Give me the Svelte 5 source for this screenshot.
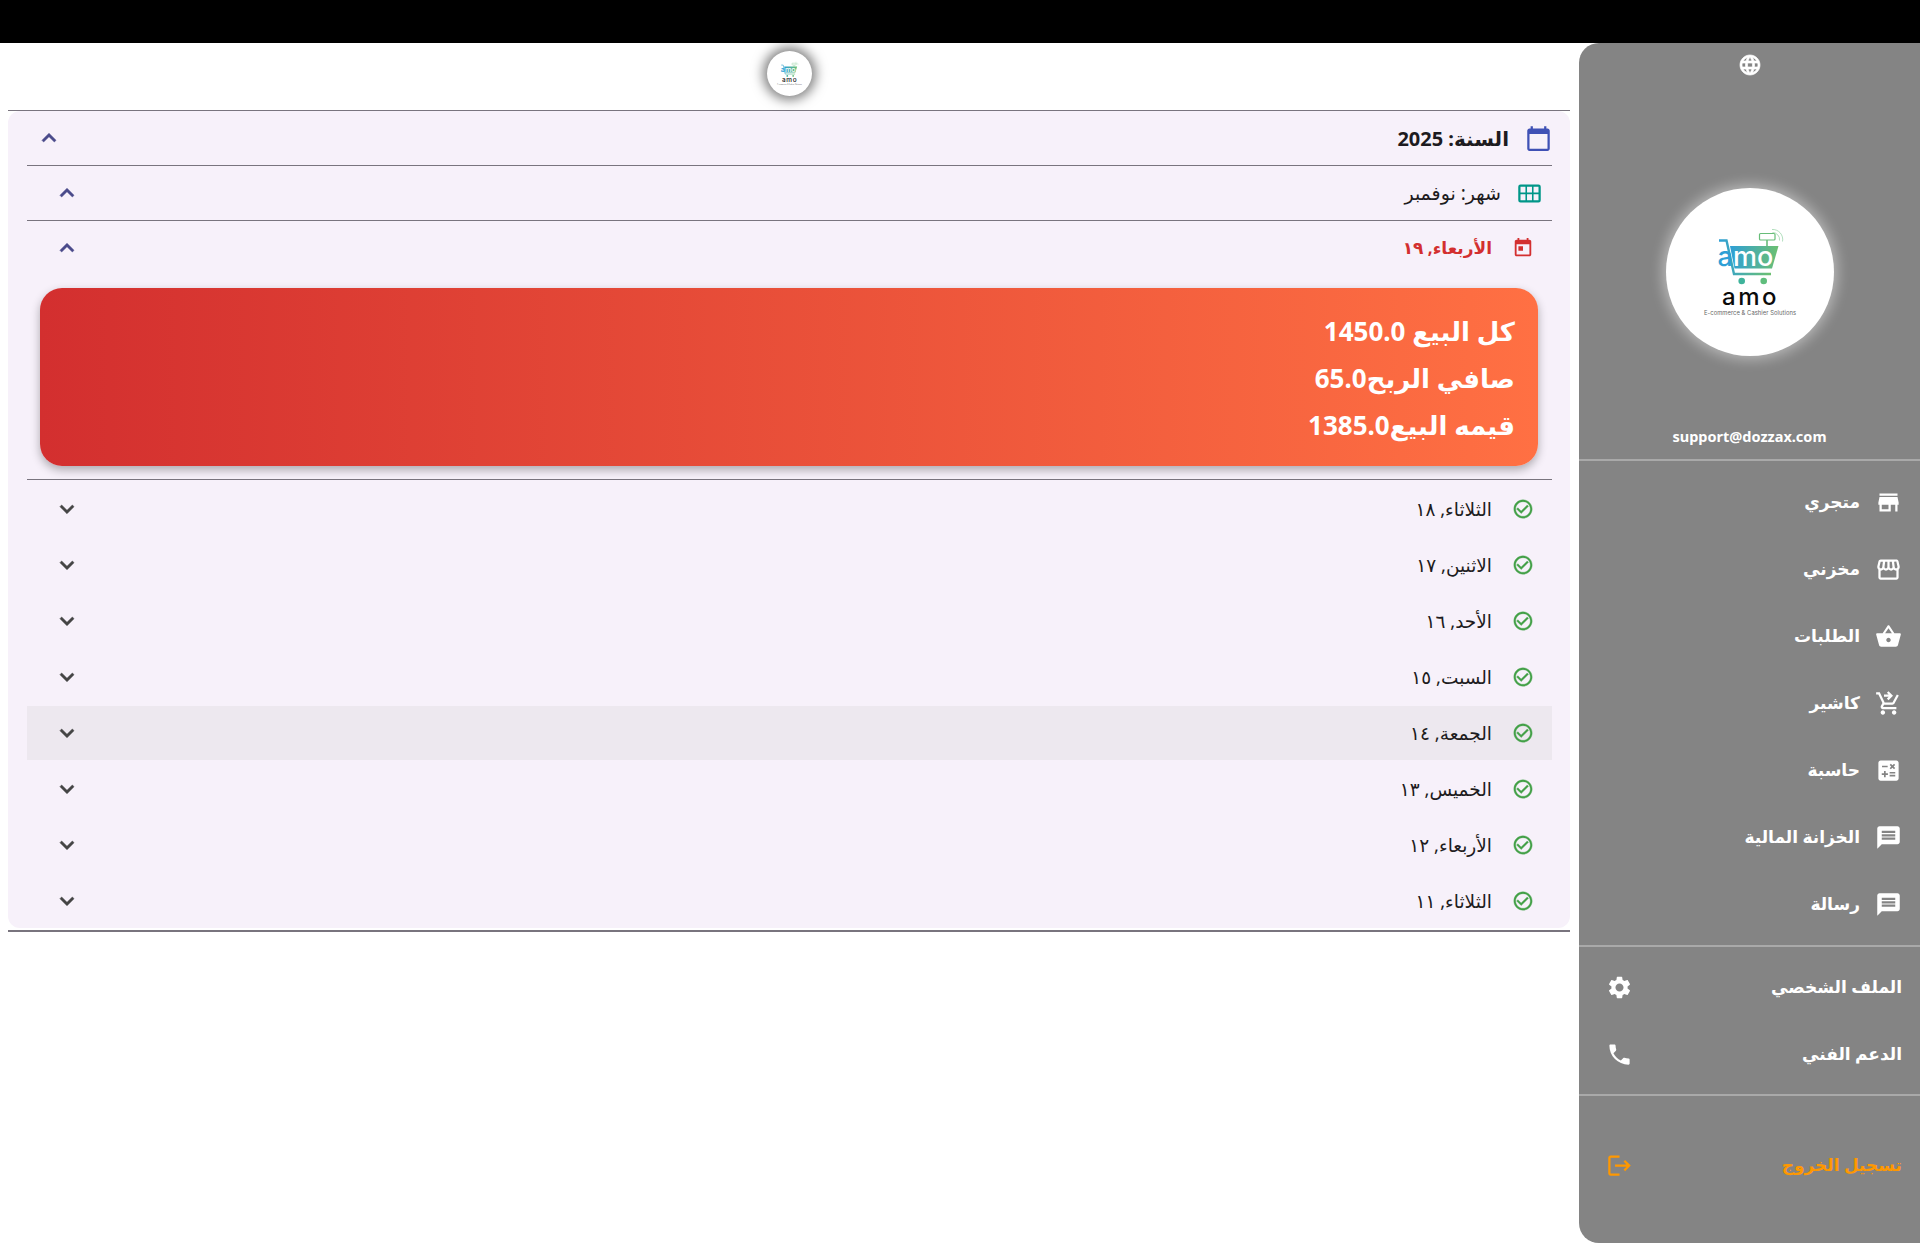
<script>
  const icons = {
    globe: 'M11.99 2C6.47 2 2 6.48 2 12s4.47 10 9.99 10C17.52 22 22 17.52 22 12S17.52 2 11.99 2zm6.93 6h-2.95c-.32-1.25-.78-2.45-1.38-3.56 1.84.63 3.37 1.91 4.33 3.56zM12 4.04c.83 1.2 1.48 2.53 1.91 3.96h-3.82c.43-1.43 1.08-2.76 1.91-3.96zM4.26 14C4.1 13.36 4 12.69 4 12s.1-1.36.26-2h3.38c-.08.66-.14 1.32-.14 2 0 .68.06 1.34.14 2H4.26zm.82 2h2.95c.32 1.25.78 2.45 1.38 3.56-1.84-.63-3.37-1.9-4.33-3.56zm2.95-8H5.08c.96-1.66 2.49-2.93 4.33-3.56C8.81 5.55 8.35 6.75 8.03 8zM12 19.96c-.83-1.2-1.48-2.53-1.91-3.96h3.82c-.43 1.43-1.08 2.76-1.91 3.96zM14.34 14H9.66c-.09-.66-.16-1.32-.16-2 0-.68.07-1.35.16-2h4.68c.09.65.16 1.32.16 2 0 .68-.07 1.34-.16 2zm.25 5.56c.6-1.11 1.06-2.31 1.38-3.56h2.95c-.96 1.65-2.49 2.93-4.33 3.56zM16.36 14c.08-.66.14-1.32.14-2 0-.68-.06-1.34-.14-2h3.38c.16.64.26 1.31.26 2s-.1 1.36-.26 2h-3.38z',
    store: 'M20 4H4v2h16V4zm1 10v-2l-1-5H4l-1 5v2h1v6h10v-6h4v6h2v-6h1zm-9 4H6v-4h6v4z',
    storefront: 'M21.9 8.89l-1.05-4.37c-.22-.9-1-1.52-1.91-1.52H5.05c-.9 0-1.69.63-1.9 1.52L2.1 8.89c-.24 1.02-.02 2.06.62 2.88.08.11.19.19.28.29V19c0 1.1.9 2 2 2h14c1.1 0 2-.9 2-2v-6.94c.09-.09.2-.18.28-.28.64-.82.87-1.87.62-2.89zm-2.99-3.9l1.05 4.37c.1.42.01.84-.25 1.17-.14.18-.44.47-.94.47-.61 0-1.14-.49-1.21-1.14L16.98 5l1.93-.01zM13 5h1.96l.54 4.52c.05.39-.07.78-.33 1.07-.22.26-.54.41-.95.41-.67 0-1.22-.59-1.22-1.31V5zM8.49 9.52L9.04 5H11v4.69c0 .72-.55 1.31-1.29 1.31-.34 0-.65-.15-.89-.41-.25-.29-.37-.68-.33-1.07zm-4.45-.16L5.05 5h1.97l-.58 4.86c-.08.65-.6 1.14-1.21 1.14-.49 0-.8-.29-.93-.47-.27-.32-.36-.75-.26-1.17zM5 19v-6.03c.08.01.15.03.23.03.87 0 1.66-.36 2.24-.95.6.6 1.4.95 2.31.95.87 0 1.65-.36 2.23-.93.59.57 1.39.93 2.29.93.84 0 1.64-.35 2.24-.95.58.59 1.37.95 2.24.95.08 0 .15-.02.23-.03V19H5z',
    basket: 'M17.21 9l-4.38-6.56c-.19-.28-.51-.42-.83-.42-.32 0-.64.14-.83.43L6.79 9H2c-.55 0-1 .45-1 1 0 .09.01.18.04.27l2.54 9.27c.23.84 1 1.46 1.92 1.46h13c.92 0 1.69-.62 1.93-1.46l2.54-9.27L23 10c0-.55-.45-1-1-1h-4.79zM9 9l3-4.4L15 9H9zm3 8c-1.1 0-2-.9-2-2s.9-2 2-2 2 .9 2 2-.9 2-2 2z',
    cart: 'M7 18c-1.1 0-1.99.9-1.99 2S5.9 22 7 22s2-.9 2-2-.9-2-2-2zm10 0c-1.1 0-1.99.9-1.99 2s.89 2 1.99 2 2-.9 2-2-.9-2-2-2zm-9.83-3.25l.03-.12.9-1.63h7.45c.75 0 1.41-.41 1.75-1.03l3.86-7.01L19.42 4h-.01l-1.1 2-2.76 5H8.53l-.13-.27L6.16 6l-.95-2-.94-2H1v2h2l3.6 7.59-1.35 2.45c-.16.28-.25.61-.25.96 0 1.1.9 2 2 2h12v-2H7.42c-.13 0-.25-.11-.25-.25zM12 1l4 4-4 4-1.41-1.41L12.17 6H8V4h4.17l-1.58-1.59z',
    calc: 'M19 3H5c-1.1 0-2 .9-2 2v14c0 1.1.9 2 2 2h14c1.1 0 2-.9 2-2V5c0-1.1-.9-2-2-2zm-5.97 4.06L14.09 6l1.41 1.41L16.91 6l1.06 1.06-1.41 1.41 1.41 1.41-1.06 1.06-1.41-1.4-1.41 1.41-1.06-1.06 1.41-1.41-1.41-1.42zM6.25 7.72h5v1.5h-5v-1.5zM11.5 16h-2v2H8v-2H6v-1.5h2v-2h1.5v2h2V16zm6.5 1.25h-5v-1.5h5v1.5zm0-2.5h-5v-1.5h5v1.5z',
    message: 'M20 2H4c-1.1 0-1.99.9-1.99 2L2 22l4-4h14c1.1 0 2-.9 2-2V4c0-1.1-.9-2-2-2zm-2 12H6v-2h12v2zm0-3H6V9h12v2zm0-3H6V6h12v2z',
    settings: 'M19.14 12.94c.04-.3.06-.61.06-.94 0-.32-.02-.64-.07-.94l2.03-1.58c.18-.14.23-.41.12-.61l-1.92-3.32c-.12-.22-.37-.29-.59-.22l-2.39.96c-.5-.38-1.03-.7-1.62-.94l-.36-2.54c-.04-.24-.24-.41-.48-.41h-3.84c-.24 0-.43.17-.47.41l-.36 2.54c-.59.24-1.13.57-1.62.94l-2.39-.96c-.22-.08-.47 0-.59.22L2.74 8.87c-.12.21-.08.47.12.61l2.03 1.58c-.05.3-.09.63-.09.94s.02.64.07.94l-2.03 1.58c-.18.14-.23.41-.12.61l1.92 3.32c.12.22.37.29.59.22l2.39-.96c.5.38 1.03.7 1.62.94l.36 2.54c.05.24.24.41.48.41h3.84c.24 0 .44-.17.47-.41l.36-2.54c.59-.24 1.13-.56 1.62-.94l2.39.96c.22.08.47 0 .59-.22l1.92-3.32c.12-.22.07-.47-.12-.61l-2.01-1.58zM12 15.6c-1.98 0-3.6-1.62-3.6-3.6s1.62-3.6 3.6-3.6 3.6 1.62 3.6 3.6-1.62 3.6-3.6 3.6z',
    phone: 'M6.62 10.79c1.44 2.83 3.76 5.14 6.59 6.59l2.2-2.2c.27-.27.67-.36 1.02-.24 1.12.37 2.33.57 3.57.57.55 0 1 .45 1 1V20c0 .55-.45 1-1 1-9.39 0-17-7.61-17-17 0-.55.45-1 1-1h3.5c.55 0 1 .45 1 1 0 1.25.2 2.45.57 3.57.11.35.03.74-.25 1.02l-2.2 2.2z',
    logout: 'M17 7l-1.41 1.41L18.17 11H8v2h10.17l-2.58 2.58L17 17l5-5zM4 5h8V3H4c-1.1 0-2 .9-2 2v14c0 1.1.9 2 2 2h8v-2H4V5z',
    calendar: 'M20 3h-1V1h-2v2H7V1H5v2H4c-1.1 0-2 .9-2 2v16c0 1.1.9 2 2 2h16c1.1 0 2-.9 2-2V5c0-1.1-.9-2-2-2zm0 18H4V8h16v13z',
    grid: 'M4 4h16a2 2 0 0 1 2 2v12a2 2 0 0 1-2 2H4a2 2 0 0 1-2-2V6a2 2 0 0 1 2-2zM4 6v5h4.400V6zM9.800 6v5h4.400V6zM15.600 6v5H20V6zM4 12.600V18h4.400v-5.400zM9.800 12.600V18h4.400v-5.400zM15.600 12.600V18H20v-5.400z',
    today: 'M19 3h-1V1h-2v2H8V1H6v2H5c-1.11 0-2 .9-2 2v14c0 1.1.89 2 2 2h14c1.1 0 2-.9 2-2V5c0-1.1-.9-2-2-2zm0 16H5V8h14v11zM7 10h5v5H7z',
    check: 'M16.59 7.58L10 14.17l-3.59-3.58L5 12l5 5 8-8zM12 2C6.48 2 2 6.48 2 12s4.48 10 10 10 10-4.48 10-10S17.52 2 12 2zm0 18c-4.42 0-8-3.58-8-8s3.58-8 8-8 8 3.58 8 8-3.58 8-8 8z',
    less: 'M12 8l-6 6 1.41 1.41L12 10.83l4.59 4.58L18 14z',
    more: 'M16.59 8.59L12 13.17 7.41 8.59 6 10l6 6 6-6z'
  };

  const days = [
    'الثلاثاء, ١٨',
    'الاثنين, ١٧',
    'الأحد, ١٦',
    'السبت, ١٥',
    'الجمعة, ١٤',
    'الخميس, ١٣',
    'الأربعاء, ١٢',
    'الثلاثاء, ١١'
  ];

  const menu = [
    { label: 'متجري', icon: 'store' },
    { label: 'مخزني', icon: 'storefront' },
    { label: 'الطلبات', icon: 'basket' },
    { label: 'كاشير', icon: 'cart' },
    { label: 'حاسبة', icon: 'calc' },
    { label: 'الخزانة المالية', icon: 'message' },
    { label: 'رسالة', icon: 'message' }
  ];
</script>

{#snippet icon(name, cls)}
  <svg class={cls} viewBox="0 0 24 24" fill="currentColor" fill-rule="evenodd" aria-hidden="true"><path d={icons[name]} /></svg>
{/snippet}

{#snippet logo(id)}
  <svg class="logo" viewBox="0 0 168 168" aria-label="amo">
    <defs>
      <linearGradient id={id} x1="0" x2="1" y1="0" y2="0">
        <stop offset="0" stop-color="#2e9fd6" />
        <stop offset="1" stop-color="#6cc070" />
      </linearGradient>
    </defs>
    <path d="M53 52.500h7.500l7.500 33.500h37" fill="none" stroke={`url(#${id})`} stroke-width="2.400" />
    <path d="M64 58h48.500l-6.500 22.500H68.500z" fill={`url(#${id})`} />
    <text class="mark-a" x="51.500" y="78">a</text>
    <text class="mark-mo" x="67" y="78">mo</text>
    <circle cx="75.700" cy="93" r="3.300" fill="#3fb39b" />
    <circle cx="97.700" cy="93" r="3.300" fill="#5fbd7c" />
    <rect x="93.500" y="45.500" width="15.500" height="6.500" rx="1" fill="none" stroke="#67bd78" stroke-width="1.200" />
    <path d="M101 52v6" stroke="#67bd78" stroke-width="1.600" />
    <path d="M106 41.500a10 10 0 0 1 10.500 12M106.500 44.500a7 7 0 0 1 7 8" fill="none" stroke="#8fd0a0" stroke-width=".7" />
    <text class="mark-name" x="84.500" y="116.500" text-anchor="middle">amo</text>
    <text class="mark-tag" x="84" y="127" text-anchor="middle" textLength="92">E-commerce &amp; Cashier Solutions</text>
  </svg>
{/snippet}

<div class="page" dir="rtl">
  <div class="topbar"></div>
  <div class="body">
    <aside class="sidebar">
      <div class="lang">{@render icon('globe', 'ic-globe')}</div>
      <div class="avatar">{@render logo('grad-big')}</div>
      <div class="email">support@dozzax.com</div>
      <div class="group first">
        {#each menu as item}
          <div class="menu-row">
            {@render icon(item.icon, 'ic')}
            <span>{item.label}</span>
          </div>
        {/each}
      </div>
      <div class="group second">
        <div class="menu-row alt">
          <span>الملف الشخصي</span>
          {@render icon('settings', 'ic')}
        </div>
        <div class="menu-row alt">
          <span>الدعم الفني</span>
          {@render icon('phone', 'ic')}
        </div>
      </div>
      <div class="group logout-group">
        <div class="menu-row alt logout">
          <span>تسجيل الخروج</span>
          {@render icon('logout', 'ic')}
        </div>
      </div>
    </aside>

    <main class="main">
      <header class="head">
        <div class="avatar small">{@render logo('grad-small')}</div>
      </header>

      <section class="panel">
        <div class="panel-in">
          <div class="row year">
            {@render icon('calendar', 'ic-year')}
            <span class="title">السنة: 2025</span>
            {@render icon('less', 'chev')}
          </div>
          <div class="inner">
            <div class="row month">
              {@render icon('grid', 'ic-month')}
              <span class="title">شهر: نوفمبر</span>
              {@render icon('less', 'chev')}
            </div>
            <div class="row day open">
              {@render icon('today', 'ic-day')}
              <span class="title">الأربعاء, ١٩</span>
              {@render icon('less', 'chev')}
            </div>
            <div class="summary">
              <p>كل البيع 1450.0</p>
              <p>صافي الربح65.0</p>
              <p>قيمه البيع1385.0</p>
            </div>
            <div class="days">
              {#each days as day, i}
                <div class="row day" class:hover={i === 4}>
                  {@render icon('check', 'ic-check')}
                  <span class="title">{day}</span>
                  {@render icon('more', 'chev dark')}
                </div>
              {/each}
            </div>
          </div>
        </div>
      </section>
    </main>
  </div>
</div>

<style>
  :global(body) {
    margin: 0;
    background: #fff;
  }

  .page {
    height: 1243px;
    display: flex;
    flex-direction: column;
    overflow: hidden;
    font-family: "Noto Sans", "DejaVu Sans", sans-serif;
    color: #1d1b20;
  }

  .topbar {
    height: 43px;
    background: #000;
    flex: none;
  }

  .body {
    flex: 1;
    display: flex;
    min-height: 0;
  }

  /* sidebar */
  .sidebar {
    width: 341px;
    flex: none;
    box-sizing: border-box;
    background: #848484;
    border-radius: 20px 0 0 20px;
    color: #fff;
    display: flex;
    flex-direction: column;
    font-weight: 700;
  }

  .lang {
    height: 54px;
    box-sizing: border-box;
    padding-top: 10px;
    display: flex;
    justify-content: center;
    flex: none;
  }

  .ic-globe {
    width: 24px;
    height: 24px;
    stroke: currentColor;
    stroke-width: 0.7;
  }

  .avatar {
    border-radius: 50%;
    background: #fff;
    box-shadow: 0 0 14px 3px rgba(255, 255, 255, 0.45);
    flex: none;
  }

  .sidebar .avatar {
    width: 168px;
    height: 168px;
    margin: 91px auto 0;
  }

  .logo {
    display: block;
    width: 100%;
    height: 100%;
    direction: ltr;
    font-weight: 400;
  }

  .mark-a,
  .mark-mo {
    font-family: "Inter", sans-serif;
    font-size: 27px;
    font-weight: 500;
  }

  .mark-a {
    fill: #2e9fd6;
  }

  .mark-mo {
    fill: #fff;
  }

  .mark-name {
    font-family: "Inter", sans-serif;
    font-size: 24px;
    font-weight: 500;
    letter-spacing: 2.500px;
    fill: #0b0b0b;
  }

  .mark-tag {
    font-family: "Inter", sans-serif;
    font-size: 5.800px;
    fill: #666;
  }

  .email {
    direction: ltr;
    text-align: center;
    font-size: 14.500px;
    line-height: 20px;
    margin-top: 70px;
    padding-bottom: 13px;
    border-bottom: 2px solid #a9a9a9;
    flex: none;
  }

  .group {
    border-bottom: 2px solid #a9a9a9;
    flex: none;
  }

  .first {
    padding: 8px 0 7px;
  }

  .second {
    padding: 7px 0 6px;
  }

  .menu-row {
    height: 67px;
    display: flex;
    align-items: center;
    gap: 14.500px;
    padding: 0 18.500px;
    font-size: 17px;
  }

  .menu-row span {
    padding-bottom: 3px;
  }

  .menu-row.alt {
    justify-content: space-between;
    padding: 0 18px 0 27px;
  }

  .logout-group {
    border-bottom: none;
    padding-top: 36px;
  }

  .logout {
    color: #ff9800;
  }

  .ic {
    width: 27px;
    height: 27px;
    flex: none;
  }

  /* main column */
  .main {
    flex: 1;
    min-width: 0;
    padding: 0 9px 0 8px;
    box-sizing: border-box;
  }

  .head {
    height: 67px;
    box-sizing: border-box;
    padding-top: 8px;
    display: flex;
    justify-content: center;
    align-items: flex-start;
  }

  .main .small {
    width: 45px;
    height: 45px;
    box-shadow: 0 0 12px 4px rgba(0, 0, 0, 0.5);
  }

  .panel {
    border-top: 1px solid #79747e;
    border-bottom: 2px solid #79747e;
  }

  .panel-in {
    background: #f7f1fa;
    border-radius: 12px;
  }

  .row {
    display: flex;
    align-items: center;
  }

  .row .title {
    flex: 1;
    min-width: 0;
  }

  .year {
    height: 54px;
    padding: 0 18.500px 0 27px;
    gap: 15.500px;
  }

  .year .title {
    font-size: 20px;
    font-weight: 700;
  }

  .ic-year {
    width: 27px;
    height: 27px;
    color: #3f51b5;
  }

  .chev {
    width: 28px;
    height: 28px;
    color: #4a4a8a;
    flex: none;
    stroke: currentColor;
    stroke-width: 0.5;
  }

  .chev.dark {
    color: #444;
  }

  .inner {
    margin: 0 18px 0 19px;
  }

  .month {
    height: 54px;
    border-top: 1px solid #79747e;
    padding: 0 9.500px 0 26px;
    gap: 14.500px;
    font-size: 19px;
  }

  .ic-month {
    width: 27px;
    height: 27px;
    color: #009688;
  }

  .day {
    height: 54px;
    padding: 0 18px 0 26px;
    gap: 20px;
    font-size: 18.500px;
    margin-bottom: 2px;
  }

  .day .title {
    padding-bottom: 2px;
  }

  .day.open {
    border-top: 1px solid #79747e;
    color: #d32f2f;
    font-weight: 700;
    font-size: 17px;
    margin-bottom: 0;
  }

  .ic-day {
    width: 22px;
    height: 22px;
  }

  .ic-check {
    width: 22px;
    height: 22px;
    color: #43a047;
    stroke: currentColor;
    stroke-width: 0.4;
  }

  .hover {
    background: #ede8ef;
  }

  .summary {
    height: 178px;
    margin: 13px 14px 13px 13px;
    box-sizing: border-box;
    padding: 20px 23px 0;
    border-radius: 22px;
    background: linear-gradient(to left, #ff7043, #d32f2f);
    box-shadow: 0 4px 10px rgba(0, 0, 0, 0.3);
    color: #fff;
    font-size: 26px;
    font-weight: 700;
  }

  .summary p {
    margin: 0;
    line-height: 47px;
  }

  .days {
    border-top: 1px solid #79747e;
    padding-top: 2px;
  }
</style>
